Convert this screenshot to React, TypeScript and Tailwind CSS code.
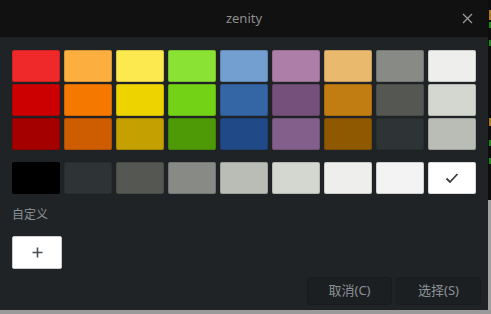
import React from "react";

const rows: string[][] = [
  ["#ef2929", "#fcaf3e", "#fce94f", "#8ae234", "#729fcf", "#ad7fa8", "#e9b96e", "#888a85", "#eeeeec"],
  ["#cc0000", "#f57900", "#edd400", "#73d216", "#3465a4", "#75507b", "#c17d11", "#555753", "#d3d7cf"],
  ["#a40000", "#ce5c00", "#c4a000", "#4e9a06", "#204a87", "#835f8c", "#8f5902", "#2e3436", "#babdb6"],
];

const grays = ["#000000", "#2e3436", "#555753", "#888a85", "#babdb6", "#d3d7cf", "#eeeeec", "#f3f3f3", "#ffffff"];

function Swatch({ color, children }: { color: string; children?: React.ReactNode }) {
  return (
    <div
      className="w-[48px] h-[32px] rounded-[2px] border border-black/15 flex items-center justify-center"
      style={{ backgroundColor: color }}
    >
      {children}
    </div>
  );
}

export default function App() {
  return (
    <div className="w-[491px] h-[314px] flex flex-col overflow-hidden bg-[#9a9a9a]" style={{ fontFamily: '"Noto Sans", "Noto Sans CJK SC", sans-serif' }}>
      <div className="flex h-[310px]">
        <div className="w-[488px] h-full flex flex-col bg-[#202326]">
          <div className="h-[37px] bg-[#111111] flex items-center justify-center relative">
            <span className="text-[13px] text-[#8e8e8e] mt-[1px]">zenity</span>
            <svg className="absolute right-[15px] top-[13px]" width="11" height="11" viewBox="0 0 11 11">
              <path d="M1 1 L10 10 M10 1 L1 10" stroke="#9a9a9a" strokeWidth="1.3" />
            </svg>
          </div>
          <div className="flex flex-col pl-[12px] pt-[13px]">
            <div className="flex flex-col gap-[2px]">
              {rows.map((r, i) => (
                <div key={i} className="flex gap-[4px]">
                  {r.map((c, j) => (
                    <Swatch key={j} color={c} />
                  ))}
                </div>
              ))}
            </div>
            <div className="flex gap-[4px] mt-[12px]">
              {grays.map((c, j) => (
                <Swatch key={j} color={c}>
                  {j === 8 ? (
                    <svg width="14" height="12" viewBox="0 0 14 12">
                      <path d="M1.5 6.5 L5 10 L12.5 2" stroke="#3c3c3c" strokeWidth="1.8" fill="none" />
                    </svg>
                  ) : null}
                </Swatch>
              ))}
            </div>
            <div className="mt-[12px] text-[12px] leading-[18px] text-[#8a9196]">自定义</div>
            <div className="mt-[12px] w-[50px] h-[33px] bg-white rounded-[2px] border border-[#c9ccd0] flex items-center justify-center">
              <svg width="11" height="11" viewBox="0 0 11 11">
                <path d="M5.5 0.5 V10.5 M0.5 5.5 H10.5" stroke="#4a4d52" strokeWidth="1.6" />
              </svg>
            </div>
          </div>
          <div className="flex justify-end gap-[4px] pr-[7px] mt-[8px]">
            <button className="w-[85px] h-[28px] rounded-[4px] bg-[#1c1f22] border border-[#181a1d] text-[13px] text-[#8a9196] flex items-center justify-center">
              取消(C)
            </button>
            <button className="w-[85px] h-[28px] rounded-[4px] bg-[#1c1f22] border border-[#181a1d] text-[13px] text-[#8a9196] flex items-center justify-center">
              选择(S)
            </button>
          </div>
        </div>
        <div className="w-[3px] h-full flex flex-col">
          <div className="h-[200px] bg-[#0d0d0d] relative">
            <div className="absolute left-[1px] top-[10px] w-[2px] h-[10px] bg-[#b07a1a]" />
            <div className="absolute left-[1px] top-[22px] w-[2px] h-[6px] bg-[#1a8a1a]" />
            <div className="absolute left-[1px] top-[40px] w-[2px] h-[6px] bg-[#1a8a1a]" />
            <div className="absolute left-[1px] top-[118px] w-[2px] h-[8px] bg-[#b07a1a]" />
            <div className="absolute left-[1px] top-[140px] w-[2px] h-[6px] bg-[#1a8a1a]" />
            <div className="absolute left-[1px] top-[158px] w-[2px] h-[6px] bg-[#1a8a1a]" />
          </div>
          <div className="flex-1 bg-[#a0a0a0]" />
        </div>
      </div>
      <div className="h-[4px] bg-[#9a9a9a]" />
    </div>
  );
}
